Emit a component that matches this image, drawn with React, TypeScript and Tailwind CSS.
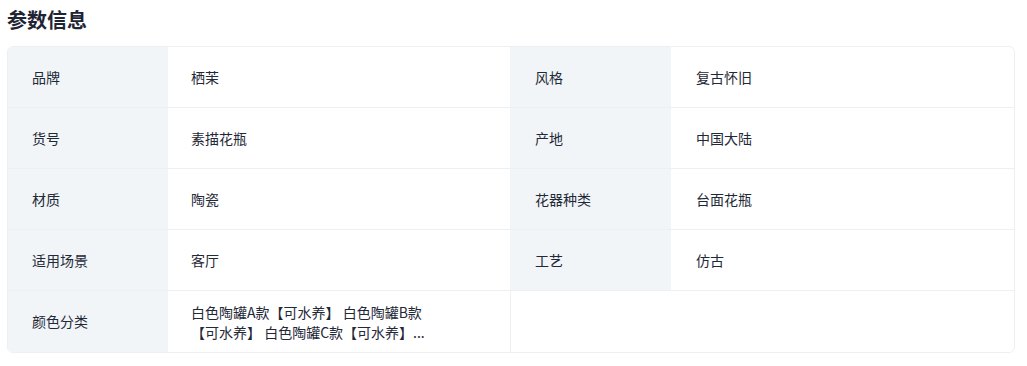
const rows: [string, string, string, string][] = [
  ["品牌", "栖茉", "风格", "复古怀旧"],
  ["货号", "素描花瓶", "产地", "中国大陆"],
  ["材质", "陶瓷", "花器种类", "台面花瓶"],
  ["适用场景", "客厅", "工艺", "仿古"],
  ["颜色分类", "白色陶罐A款【可水养】 白色陶罐B款【可水养】 白色陶罐C款【可水养】...", "", ""],
];

export default function App() {
  return (
    <div
      className="w-[1027px] h-[366px] bg-white px-[7px] pt-[6px] text-[#1f2937]"
      style={{ fontFamily: '"Noto Sans CJK SC", "Noto Sans", sans-serif' }}
    >
      {/* Title */}
      <h2 className="text-[20px] leading-[28px] font-bold text-[#1e2433] mb-[12px]">参数信息</h2>

      {/* Spec table */}
      <div className="w-[1008px] border border-[#edf0f3] rounded-md overflow-hidden">
        {rows.map(([k1, v1, k2, v2], i) => (
          <div
            key={k1}
            className={`flex h-[61px] text-[14px] ${i < rows.length - 1 ? "border-b border-[#edf0f3]" : ""}`}
          >
            <div className="w-[160px] shrink-0 bg-[#f1f5f8] flex items-center pl-[24px]">{k1}</div>
            <div className="w-[342px] shrink-0 flex items-center pl-[23px]">
              <span className="w-[240px] leading-[20px] line-clamp-2">{v1}</span>
            </div>
            <div
              className={`w-[161px] shrink-0 flex items-center pl-[25px] ${
                k2 ? "bg-[#f1f5f8]" : "bg-white border-l border-[#edf0f3]"
              }`}
            >
              {k2}
            </div>
            <div className="flex-1 flex items-center pl-[25px]">{v2}</div>
          </div>
        ))}
      </div>
    </div>
  );
}
